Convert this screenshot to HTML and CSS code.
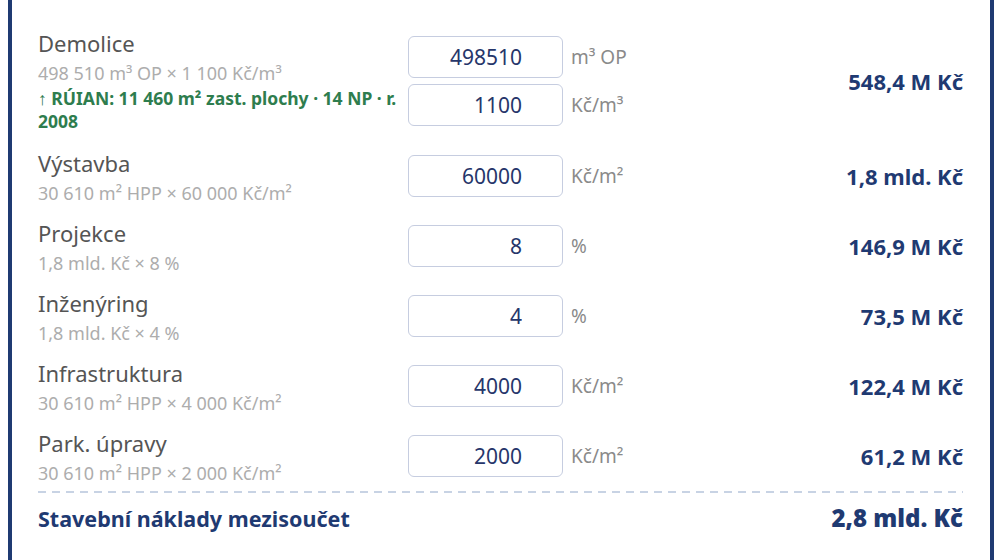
FILE: index.html
```html
<!DOCTYPE html>
<html lang="cs">
<head>
    <meta charset="UTF-8">
    <meta name="viewport" content="width=device-width, initial-scale=1.0">
    <title>Stavební náklady</title>
    <link rel="stylesheet" href="styles.css">
</head>
<body>

    <div class="cost-card">

        <!-- Demolice -->
        <div class="cost-row">
            <div class="cost-label">
                <div class="name">Demolice</div>
                <div class="formula">498 510 m³ OP × 1 100 Kč/m³</div>
                <div class="source">↑ RÚIAN: 11 460 m² zast. plochy · 14 NP · r. 2008</div>
            </div>
            <div class="cost-inputs">
                <div class="input-line"><input class="num" type="text" value="498510"><span class="unit">m³ OP</span></div>
                <div class="input-line"><input class="num" type="text" value="1100"><span class="unit">Kč/m³</span></div>
            </div>
            <div class="cost-value">548,4 M Kč</div>
        </div>

        <div class="cost-row">
            <div class="cost-label">
                <div class="name">Výstavba</div>
                <div class="formula">30 610 m² HPP × 60 000 Kč/m²</div>
            </div>
            <div class="cost-inputs">
                <div class="input-line"><input class="num" type="text" value="60000"><span class="unit">Kč/m²</span></div>
            </div>
            <div class="cost-value">1,8 mld. Kč</div>
        </div>

        <div class="cost-row">
            <div class="cost-label">
                <div class="name">Projekce</div>
                <div class="formula">1,8 mld. Kč × 8 %</div>
            </div>
            <div class="cost-inputs">
                <div class="input-line"><input class="num" type="text" value="8"><span class="unit">%</span></div>
            </div>
            <div class="cost-value">146,9 M Kč</div>
        </div>

        <div class="cost-row">
            <div class="cost-label">
                <div class="name">Inženýring</div>
                <div class="formula">1,8 mld. Kč × 4 %</div>
            </div>
            <div class="cost-inputs">
                <div class="input-line"><input class="num" type="text" value="4"><span class="unit">%</span></div>
            </div>
            <div class="cost-value">73,5 M Kč</div>
        </div>

        <div class="cost-row">
            <div class="cost-label">
                <div class="name">Infrastruktura</div>
                <div class="formula">30 610 m² HPP × 4 000 Kč/m²</div>
            </div>
            <div class="cost-inputs">
                <div class="input-line"><input class="num" type="text" value="4000"><span class="unit">Kč/m²</span></div>
            </div>
            <div class="cost-value">122,4 M Kč</div>
        </div>

        <div class="cost-row">
            <div class="cost-label">
                <div class="name">Park. úpravy</div>
                <div class="formula">30 610 m² HPP × 2 000 Kč/m²</div>
            </div>
            <div class="cost-inputs">
                <div class="input-line"><input class="num" type="text" value="2000"><span class="unit">Kč/m²</span></div>
            </div>
            <div class="cost-value">61,2 M Kč</div>
        </div>

        <!-- Subtotal -->
        <div class="dash-line"></div>
        <div class="subtotal">
            <div class="subtotal-label">Stavební náklady mezisoučet</div>
            <div class="subtotal-value">2,8 mld. Kč</div>
        </div>

    </div>

</body>
</html>
```

FILE: styles.css
```css
* {
    margin: 0;
    padding: 0;
    box-sizing: border-box;
}

body {
    font-family: "Noto Sans", "Open Sans", sans-serif;
    background-color: white;
    height: 560px;
    overflow: hidden;
}

.cost-card {
    margin-left: 8px;
    width: 986px;
    min-height: 600px;
    border-left: 4px solid #1f3a72;
    border-right: 4px solid #1f3a72;
    padding: 21px 27px 0 26px;
}

/* One cost item */
.cost-row {
    display: grid;
    grid-template-columns: 370px 1fr auto;
    align-items: center;
    padding: 14px 0;
}

.cost-label {
    align-self: start;
    margin-top: -3px;
    margin-bottom: -6px;
}

.cost-label .name {
    font-size: 22px;
    line-height: 22px;
    color: #555;
}

.cost-label .formula {
    margin-top: 9px;
    font-size: 18px;
    line-height: 20px;
    color: #adadad;
}

.cost-label .source {
    margin-top: 4px;
    font-size: 17.5px;
    line-height: 23px;
    font-weight: 700;
    color: #2e7d4e;
}

.cost-inputs {
    display: flex;
    flex-direction: column;
    gap: 6px;
}

.input-line {
    display: flex;
    align-items: center;
    gap: 8px;
}

.num {
    width: 155px;
    height: 42px;
    border: 1.5px solid #c6cde0;
    border-radius: 6px;
    padding: 0 40px 0 8px;
    font-family: inherit;
    font-size: 21px;
    color: #26366a;
    text-align: right;
    outline: none;
}

.unit {
    font-size: 19px;
    color: #8a8a8a;
}

.cost-value {
    font-size: 22px;
    font-weight: 700;
    color: #1f3a72;
    text-align: right;
}

/* Subtotal */
.dash-line {
    height: 2px;
    background: repeating-linear-gradient(to right, #c8d3e4 0 8px, transparent 8px 14px);
}

.subtotal {
    display: flex;
    justify-content: space-between;
    align-items: baseline;
    padding-top: 13px;
}

.subtotal-label {
    font-size: 21.5px;
    line-height: 24px;
    font-weight: 700;
    color: #1f3a72;
}

.subtotal-value {
    font-family: "Open Sans", "Noto Sans", sans-serif;
    font-size: 24px;
    line-height: 24px;
    font-weight: 800;
    color: #1f3a72;
}
```
